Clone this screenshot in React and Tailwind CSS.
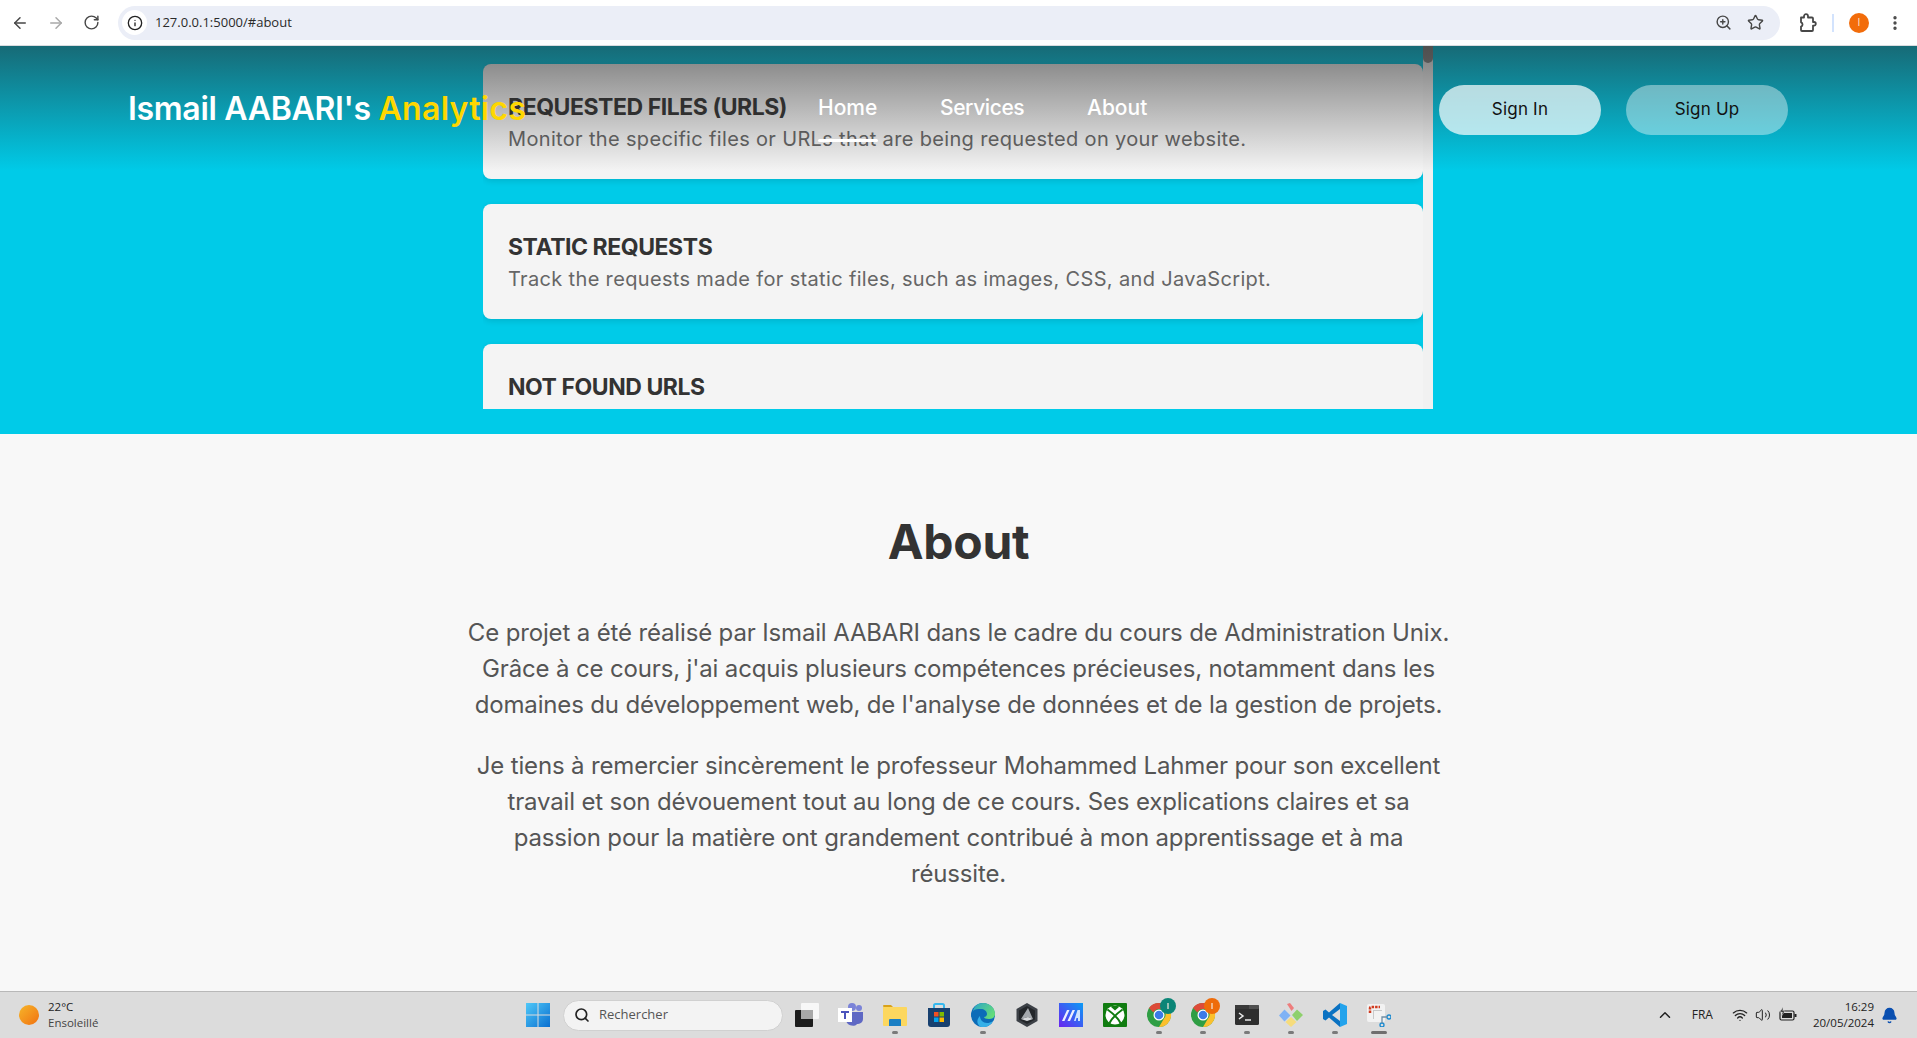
import React from 'react';
import {
  ArrowLeft,
  ArrowRight,
  RotateCw,
  Info,
  ZoomIn,
  Star,
  EllipsisVertical,
  Search,
  ChevronUp,
  Wifi,
  Volume2,
  Bell,
} from 'lucide-react';

const CARDS = [
  { title: 'REQUESTED FILES (URLS)', text: 'Monitor the specific files or URLs that are being requested on your website.' },
  { title: 'STATIC REQUESTS', text: 'Track the requests made for static files, such as images, CSS, and JavaScript.' },
  { title: 'NOT FOUND URLS', text: 'Identify URLs that resulted in (404 errors).' },
];

/* --- toolbar / tray drawings lucide doesn't have in this shape --- */
const ExtensionIcon = () => (
  <svg width="20" height="20" viewBox="0 0 20 20" className="ml-[17px]">
    <path
      d="M4 4.5h3V3.2a2 2 0 0 1 4 0v1.3h4a1 1 0 0 1 1 1V9h1a1.8 1.8 0 0 1 0 3.6h-1V17a1 1 0 0 1-1 1H5a1 1 0 0 1-1-1v-3.5a2.2 2.2 0 0 0 0-4.2z"
      fill="none"
      stroke="#474747"
      strokeWidth="1.8"
      strokeLinejoin="round"
    />
  </svg>
);

const BatteryIcon = () => (
  <svg width="18" height="16" viewBox="0 0 18 16" className="ml-[8px]">
    <rect x="1" y="4" width="14" height="9" rx="1.5" fill="none" stroke="#222" strokeWidth="1.2" />
    <rect x="3" y="6" width="10" height="5" fill="#222" />
    <rect x="15.5" y="7" width="2" height="3" fill="#222" />
    <path d="M4 0L1 5h2.5L2.5 9 6 4H3.8z" fill="#222" stroke="#dcdcdc" strokeWidth="0.5" />
  </svg>
);

/* --- taskbar app icons --- */
const WindowsIcon = () => (
  <svg width="24" height="24" viewBox="0 0 24 24">
    <defs>
      <linearGradient id="win" x1="0" y1="0" x2="1" y2="1">
        <stop offset="0" stopColor="#4fc8f8" />
        <stop offset="1" stopColor="#0a6fd0" />
      </linearGradient>
    </defs>
    <path fill="url(#win)" d="M0 0h11.5v11.5H0zM12.5 0H24v11.5H12.5zM0 12.5h11.5V24H0zM12.5 12.5H24V24H12.5z" />
  </svg>
);

const TaskViewIcon = () => (
  <svg width="24" height="24" viewBox="0 0 24 24">
    <rect x="0" y="7" width="18" height="17" rx="1" fill="#1c1c1c" />
    <rect x="6" y="0" width="18" height="16" rx="1" fill="#f7f7f7" />
    <rect x="6" y="7" width="12" height="9" fill="#a8a8a8" />
  </svg>
);

const TeamsIcon = () => (
  <svg width="26" height="24" viewBox="0 0 26 24">
    <circle cx="21" cy="5" r="3" fill="#7b83d8" />
    <circle cx="14" cy="4" r="4" fill="#7b83d8" />
    <path d="M8 9h17v7a5 5 0 0 1-5 5h-1a5 5 0 0 1-2 1.5c-5 1-9-2-9-6z" fill="#5f68c4" />
    <rect x="0" y="5" width="14" height="14" fill="#fff" />
    <path d="M3 8h8v2H8v6H6v-6H3z" fill="#4b53bc" />
  </svg>
);

const FolderIcon = () => (
  <svg width="24" height="24" viewBox="0 0 24 24">
    <path d="M0 3a1 1 0 0 1 1-1h7l3 3H1z" fill="#d9a21b" />
    <rect x="0" y="4" width="24" height="19" rx="1" fill="#fcd75f" />
    <path d="M6 17a1 1 0 0 1 1-1h10a1 1 0 0 1 1 1v6H6z" fill="#1a7fc4" />
  </svg>
);

const StoreIcon = () => (
  <svg width="24" height="24" viewBox="0 0 24 24">
    <path d="M7 6V2.5A1.5 1.5 0 0 1 8.5 1h7A1.5 1.5 0 0 1 17 2.5V6" fill="none" stroke="#35b8ee" strokeWidth="2" />
    <path d="M1 5h22v16a3 3 0 0 1-3 3H4a3 3 0 0 1-3-3z" fill="#17406f" />
    <rect x="7" y="9" width="4.5" height="4.5" fill="#f25022" />
    <rect x="12.5" y="9" width="4.5" height="4.5" fill="#7fba00" />
    <rect x="7" y="14.5" width="4.5" height="4.5" fill="#00a4ef" />
    <rect x="12.5" y="14.5" width="4.5" height="4.5" fill="#ffb900" />
  </svg>
);

const EdgeIcon = () => (
  <svg width="24" height="24" viewBox="0 0 24 24">
    <defs>
      <linearGradient id="edge" x1="0" y1="0" x2="1" y2="0.6">
        <stop offset="0" stopColor="#2aa5c9" />
        <stop offset="1" stopColor="#65dc7a" />
      </linearGradient>
    </defs>
    <circle cx="12" cy="12" r="12" fill="#0c6cb8" />
    <path d="M2 8C3 3 7 0 12 0c7 0 12 5 12 11 0 3-2 5-6 5-3 0-5-1-5-2 2 0 3-2 3-3 0-3-3-5-6-5S4 6 2 8z" fill="url(#edge)" />
    <path d="M9 13c0 4 3 7 7 7 2 0 4-.5 6-2-2 4-6 6-10 6-1 0-2 0-3-.5C6 21 5 17 9 13z" fill="#35b0e8" />
  </svg>
);

const HexIcon = () => (
  <svg width="24" height="24" viewBox="0 0 24 24">
    <path d="M12 0l10.5 6v12L12 24 1.5 18V6z" fill="#3c4046" />
    <path d="M12 3l8 4.5v9L12 21l-8-4.5v-9z" fill="#23262a" />
    <path d="M13 5l5 11-5-2-7 2z" fill="#a4a8ad" />
    <path d="M6 16l7-2 5 2-6 2z" fill="#d8dadd" />
  </svg>
);

const MaIcon = () => (
  <svg width="24" height="24" viewBox="0 0 24 24">
    <defs>
      <linearGradient id="ma" x1="0" y1="1" x2="1" y2="0">
        <stop offset="0" stopColor="#6a23f0" />
        <stop offset="1" stopColor="#0a9bf5" />
      </linearGradient>
    </defs>
    <rect width="24" height="24" fill="url(#ma)" />
    <path d="M3 18l5-11h2.5l-5 11zM8.5 18l5-11H16l-5 11z" fill="#eef0ff" />
    <path d="M15 18l3.5-11H21v11h-2v-3h-1.5l-.8 3z" fill="#cfe4ff" />
  </svg>
);

const XboxIcon = () => (
  <svg width="24" height="24" viewBox="0 0 24 24">
    <rect width="24" height="24" rx="1" fill="#107c10" />
    <circle cx="12" cy="12" r="9.5" fill="#fff" />
    <path d="M7.5 3.6C9 3 10.5 2.7 12 2.7s3 .3 4.5 .9L12 7.5z" fill="#107c10" />
    <path d="M4.5 6.5C8 9 15 15 17.5 20M19.5 6.5C16 9 9 15 6.5 20" fill="none" stroke="#107c10" strokeWidth="2" />
  </svg>
);

const ChromeIcon = ({ badge }) => (
  <svg width="24" height="24" viewBox="0 0 24 24" className="overflow-visible">
    <circle cx="12" cy="12" r="12" fill="#2f9e44" />
    <path d="M12 0a12 12 0 0 1 10.4 6H12a6 6 0 0 0-5.5 3.5L2 5a12 12 0 0 1 10-5z" fill="#dd4b39" />
    <path d="M22.4 6A12 12 0 0 1 12 24l5-8.5A6 6 0 0 0 18 9z" fill="#fbc02d" />
    <circle cx="12" cy="12" r="5.5" fill="#fff" />
    <circle cx="12" cy="12" r="4.3" fill="#3b7be8" />
    <circle cx="21" cy="3" r="8" fill={badge} />
    <rect x="20.4" y="0" width="1.2" height="6" fill="#f4e8dc" />
  </svg>
);

const TerminalIcon = () => (
  <svg width="24" height="20" viewBox="0 0 24 20">
    <rect width="24" height="20" rx="1.5" fill="#2f2f2f" />
    <rect width="24" height="4" rx="1" fill="#505050" />
    <rect x="0" y="0" width="14" height="4" fill="#3a3a3a" />
    <path d="M4 8l4 3-4 3" fill="none" stroke="#eaeaea" strokeWidth="1.5" />
    <path d="M10 15h6" stroke="#eaeaea" strokeWidth="1.5" />
  </svg>
);

const DiamondIcon = () => (
  <svg width="24" height="24" viewBox="0 0 24 24">
    <path d="M5.5 6.5l6 6-6 6L0 12.5z" fill="#7fb2f5" />
    <path d="M8 1l3-1 4 5-2.5 3z" fill="#ee7d7d" />
    <path d="M18 6.5l6 5.5-6 6-5-6z" fill="#8ed06c" />
    <path d="M12 14l5.5 5-5.5 5-5.5-5z" fill="#f6dc7c" />
  </svg>
);

const VsCodeIcon = () => (
  <svg width="24" height="24" viewBox="0 0 24 24">
    <path d="M17 0l7 3v18l-7 3V0z" fill="#23a3ec" />
    <path d="M17 0v6L9 12l8 6v6L6 14.5 2.5 17.5 0 16v-8l2.5-1.5L6 9.5z" fill="#0a72c2" />
  </svg>
);

const SnipIcon = () => (
  <svg width="24" height="24" viewBox="0 0 24 24">
    <rect x="0" y="1" width="18" height="18" rx="2" fill="#f2f2f2" />
    <path d="M3 10V5a1 1 0 0 1 1-1h9" fill="none" stroke="#d13b1f" strokeWidth="2.5" strokeDasharray="2.5 1" />
    <path d="M6 7h9v9H6z" fill="#c9c9c9" />
    <path d="M7 8h8v8H7z" fill="#f2f2f2" />
    <circle cx="22" cy="14" r="2" fill="none" stroke="#1a8ad0" strokeWidth="1.3" />
    <circle cx="15" cy="22" r="2" fill="none" stroke="#1a8ad0" strokeWidth="1.3" />
    <path d="M15 20v-6h5" fill="none" stroke="#6f8fa5" strokeWidth="1.3" />
  </svg>
);

const APPS = [
  { id: 'teams', icon: <TeamsIcon /> },
  { id: 'files', icon: <FolderIcon />, running: true },
  { id: 'store', icon: <StoreIcon /> },
  { id: 'edge', icon: <EdgeIcon />, running: true },
  { id: 'hex', icon: <HexIcon /> },
  { id: 'ma', icon: <MaIcon /> },
  { id: 'xbox', icon: <XboxIcon /> },
  { id: 'chrome1', icon: <ChromeIcon badge="#0b8577" />, running: true },
  { id: 'chrome2', icon: <ChromeIcon badge="#ee6c0a" />, running: true },
  { id: 'term', icon: <TerminalIcon />, running: true },
  { id: 'git', icon: <DiamondIcon />, running: true },
  { id: 'vscode', icon: <VsCodeIcon />, running: true },
  { id: 'snip', icon: <SnipIcon />, active: true },
];

const BrowserBar = () => (
  <div className="h-[46px] shrink-0 bg-white border-b border-[#dadce0] flex items-center font-['Open_Sans',sans-serif]">
    <div className="w-[118px] shrink-0 flex items-center pl-[11px] gap-[18px]">
      <ArrowLeft size={18} strokeWidth={2} className="text-[#474747]" />
      <ArrowRight size={18} strokeWidth={2} className="text-[#a9a9a9]" />
      <RotateCw size={17} strokeWidth={2} className="text-[#474747]" />
    </div>
    <div className="w-[1662px] h-[34px] rounded-full bg-[#ebeef7] flex items-center pl-[4px] pr-[16px]">
      <div className="w-[25px] h-[25px] rounded-full bg-white flex items-center justify-center">
        <Info size={16} strokeWidth={2} className="text-[#222]" />
      </div>
      <span className="ml-[8px] text-[13px] text-[#2a2a2a]">127.0.0.1:5000/#about</span>
      <div className="ml-auto flex items-center gap-[15px]">
        <ZoomIn size={17} strokeWidth={2} className="text-[#474747]" />
        <Star size={17} strokeWidth={2} className="text-[#474747]" />
      </div>
    </div>
    <ExtensionIcon />
    <div className="ml-[15px] w-[2px] h-[18px] bg-[#d3e3fd]" />
    <div className="ml-[15px] w-[20px] h-[20px] rounded-full bg-[#f26c0a] flex items-center justify-center text-[10px] text-[#ffe9d8]">
      I
    </div>
    <EllipsisVertical size={18} strokeWidth={2.5} className="ml-[17px] text-[#474747]" />
  </div>
);

const ServiceCard = ({ title, text }) => (
  <div className="h-[115px] shrink-0 bg-[#f4f4f4] rounded-lg shadow-[0_2px_6px_rgba(0,0,0,0.12)] px-[25px] pt-[27px]">
    <h3 className="text-[23px] leading-[32px] font-bold text-[#333] tracking-[-0.45px]">{title}</h3>
    <p className="text-[20px] leading-[32px] text-[#666] tracking-[0.34px] whitespace-nowrap">{text}</p>
  </div>
);

const Header = () => (
  <header className="absolute top-0 left-0 right-0 h-[125px] bg-gradient-to-b from-[rgba(39,39,39,0.59)] to-transparent flex items-center pl-[128px] pr-[129px]">
    <div className="w-[690px] text-[32px] font-semibold text-white whitespace-nowrap tracking-[-0.31px]">
      Ismail AABARI's <span className="text-[#ffd700] tracking-[0.3px]">Analytics</span>
    </div>
    <nav className="flex gap-[62px] text-[21px] font-medium text-white mb-[2px]">
      <a className="relative w-[60px] whitespace-nowrap">
        Home
        <span className="absolute left-0 right-0 top-[47px] h-[3px] bg-white rounded-full" />
      </a>
      <a className="w-[85px] whitespace-nowrap tracking-[-0.4px]">Services</a>
      <a className="w-[61px] whitespace-nowrap">About</a>
    </nav>
    <div className="ml-auto flex gap-[25px] mt-[3px]">
      <button className="w-[162px] h-[50px] rounded-[25px] bg-white/70 text-[17px] text-[#111] tracking-[0.2px]">Sign In</button>
      <button className="w-[162px] h-[50px] rounded-[25px] bg-white/40 text-[17px] text-[#111] tracking-[0.2px]">Sign Up</button>
    </div>
  </header>
);

const Hero = () => (
  <section className="relative h-[388px] shrink-0 bg-[#00cbe8] flex justify-center pr-[1px]">
    <div className="w-[950px] h-[363px] flex overflow-hidden">
      <div className="w-[940px] flex flex-col gap-[25px] pt-[18px]">
        {CARDS.map((card) => (
          <ServiceCard key={card.title} title={card.title} text={card.text} />
        ))}
      </div>
      <div className="w-[10px] bg-[#f1f1f1]">
        <div className="h-[17px] bg-[#888] rounded-b-full" />
      </div>
    </div>
    <Header />
  </section>
);

const About = () => (
  <section className="flex-1 bg-[#f8f8f8] flex flex-col items-center pt-[84px] text-center">
    <h2 className="text-[48px] leading-[48px] font-bold text-[#333] mb-[49px] tracking-[-0.3px]">About</h2>
    <div className="w-[985px] flex flex-col gap-[25px] text-[24px] leading-[36px] text-[#555] tracking-[-0.15px]">
      <p>
        Ce projet a été réalisé par Ismail AABARI dans le cadre du cours de Administration Unix. Grâce à ce cours, j'ai
        acquis plusieurs compétences précieuses, notamment dans les domaines du développement web, de l'analyse de
        données et de la gestion de projets.
      </p>
      <p>
        Je tiens à remercier sincèrement le professeur Mohammed Lahmer pour son excellent travail et son dévouement
        tout au long de ce cours. Ses explications claires et sa passion pour la matière ont grandement contribué à mon
        apprentissage et à ma réussite.
      </p>
    </div>
  </section>
);

const Taskbar = () => (
  <footer className="h-[47px] shrink-0 bg-[#dcdcdc] border-t border-[#b8b8b8] flex items-center font-['Open_Sans',sans-serif] text-[#222]">
    {/* weather */}
    <div className="w-[516px] shrink-0 flex items-center pl-[19px]">
      <div className="w-[20px] h-[20px] rounded-full bg-gradient-to-br from-[#f5b52a] to-[#f0700f]" />
      <div className="ml-[9px] text-[11.5px] leading-[16px]">
        <div>22°C</div>
        <div className="text-[#444]">Ensoleillé</div>
      </div>
    </div>

    <div className="w-[44px] flex justify-center">
      <WindowsIcon />
    </div>
    <div className="ml-[3px] w-[220px] h-[31px] rounded-full bg-[#f3f3f3] border border-[#d0d0d0] flex items-center pl-[10px] text-[#555] text-[13px]">
      <Search size={16} strokeWidth={2.5} className="text-[#222]" />
      <span className="ml-[9px]">Rechercher</span>
    </div>
    <div className="ml-[2px] w-[44px] flex justify-center">
      <TaskViewIcon />
    </div>
    <div className="flex">
      {APPS.map((app) => (
        <div key={app.id} className="relative w-[44px] h-[46px] flex items-center justify-center">
          {app.icon}
          {app.running && <span className="absolute bottom-[4px] w-[6px] h-[3px] rounded-full bg-[#7a7a7a]" />}
          {app.active && <span className="absolute bottom-[4px] w-[16px] h-[3px] rounded-full bg-[#6f6f6f]" />}
        </div>
      ))}
    </div>

    {/* system tray */}
    <div className="ml-auto flex items-center pr-[19px]">
      <ChevronUp size={18} strokeWidth={2} />
      <span className="ml-[18px] text-[12px]">FRA</span>
      <Wifi size={16} strokeWidth={2} className="ml-[19px]" />
      <Volume2 size={16} strokeWidth={1.5} className="ml-[7px]" />
      <BatteryIcon />
      <div className="ml-[16px] text-right text-[11.5px] leading-[16px]">
        <div>16:29</div>
        <div>20/05/2024</div>
      </div>
      <Bell size={17} fill="#0a4fb0" className="ml-[7px] text-[#0a4fb0]" />
    </div>
  </footer>
);

export default function App() {
  return (
    <div className="h-screen flex flex-col overflow-hidden font-['Inter',sans-serif]">
      <BrowserBar />
      <Hero />
      <About />
      <Taskbar />
    </div>
  );
}
